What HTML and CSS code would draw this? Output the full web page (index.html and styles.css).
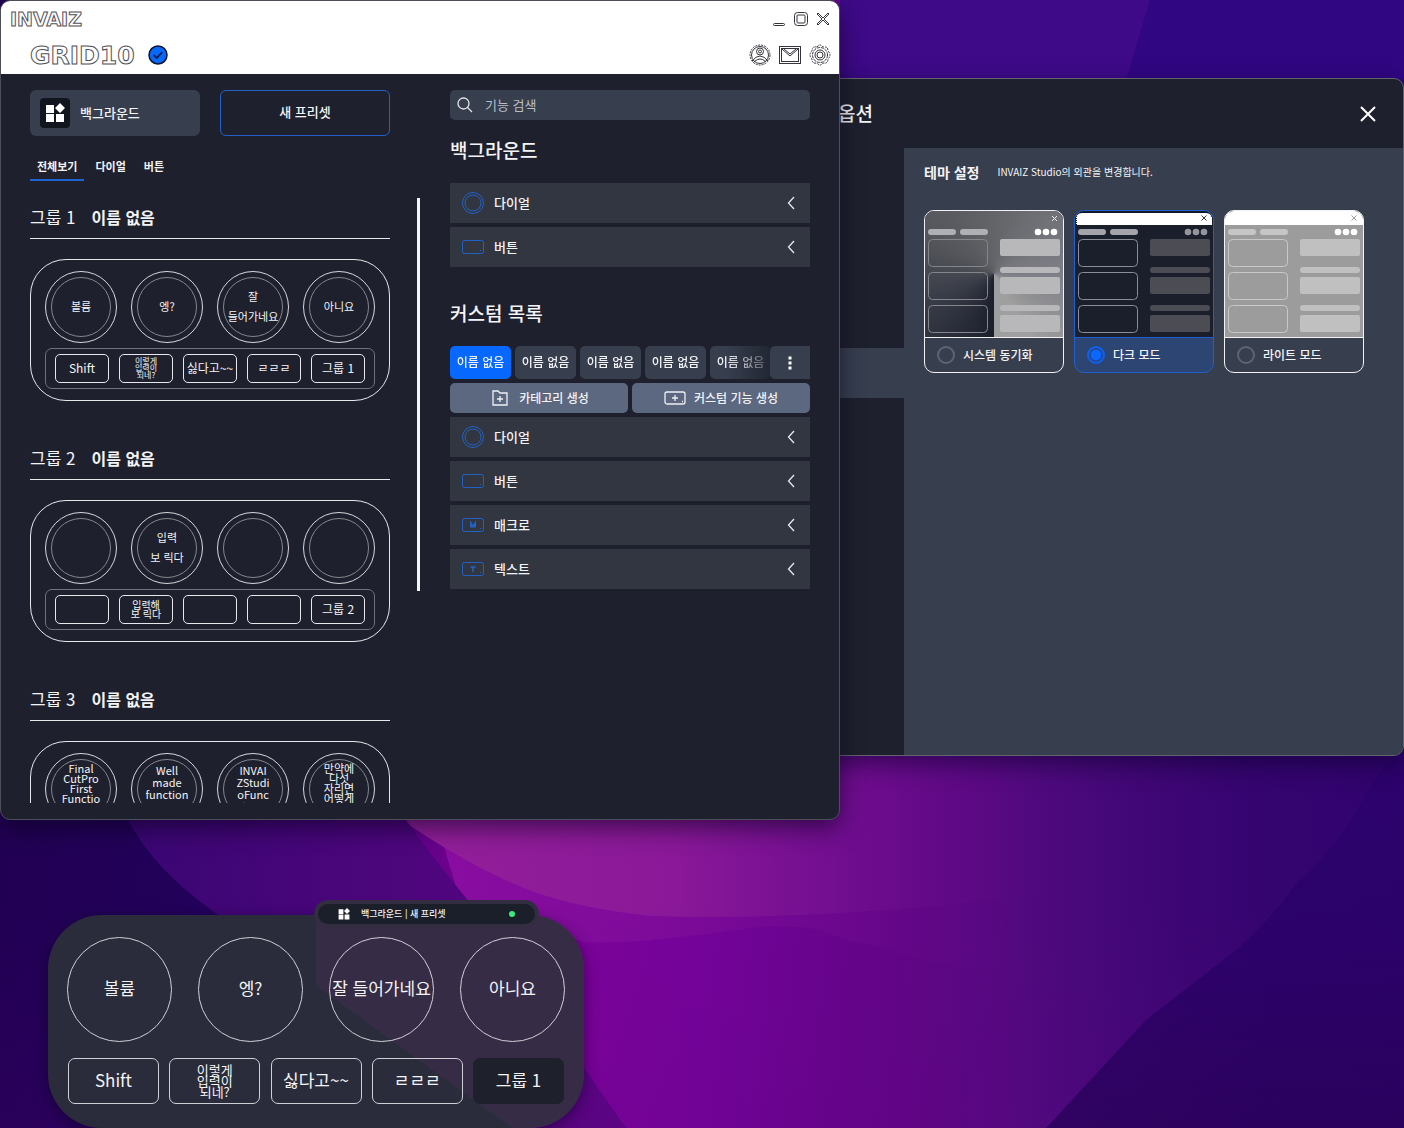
FILE: index.html
```html
<!DOCTYPE html>
<html lang="ko">
<head>
<meta charset="utf-8">
<meta name="viewport" content="width=device-width, initial-scale=1">
<title>INVAIZ Studio</title>
<link rel="stylesheet" href="styles.css">
</head>
<body>
<svg class="sprite" aria-hidden="true">
  <symbol id="i-dial" viewBox="0 0 24 24"><circle cx="12" cy="12" r="10.500"/><circle cx="12" cy="12" r="8"/></symbol>
  <symbol id="i-key" viewBox="0 0 24 24"><rect x="1.500" y="5.500" width="21" height="13" rx="2"/><path d="M19 15.500h1"/></symbol>
  <symbol id="i-left" viewBox="0 0 10 16"><path d="M8 2 2.500 8 8 14"/></symbol>
  <symbol id="i-apps" viewBox="0 0 20 20"><path d="M1 2h8v8H1zM1 11h8v8H1zM11 11h8v8h-8zM15 0l5 5-5 5-5-5z"/></symbol>
  <symbol id="i-theme" viewBox="0 0 138 126">
    <g class="m-pill"><rect x="3" y="18" width="28" height="6" rx="3"/><rect x="35" y="18" width="28" height="6" rx="3"/></g>
    <g class="m-dot"><circle cx="113" cy="21" r="3.300"/><circle cx="121" cy="21" r="3.300"/><circle cx="129" cy="21" r="3.300"/></g>
    <g class="m-box"><rect x="3.500" y="28.500" width="59" height="27" rx="4"/><rect x="3.500" y="61.500" width="59" height="27" rx="4"/><rect x="3.500" y="94.500" width="59" height="27" rx="4"/></g>
    <g class="m-bar"><rect x="75" y="28" width="60" height="17" rx="2"/><rect x="75" y="56" width="60" height="6" rx="3"/><rect x="75" y="66" width="60" height="17" rx="2"/><rect x="75" y="94" width="60" height="6" rx="3"/><rect x="75" y="104" width="60" height="17" rx="2"/></g>
  </symbol>
</svg>

<svg class="wallpaper" viewBox="0 0 1404 1128" preserveAspectRatio="none" aria-hidden="true">
  <defs>
    <linearGradient id="w-base" x1="0" x2="1" y1="0" y2="0"><stop offset="0" stop-color="#25005f"/><stop offset=".4" stop-color="#7c0299"/><stop offset=".5" stop-color="#74039a"/><stop offset=".64" stop-color="#610586"/><stop offset=".75" stop-color="#500a7e"/><stop offset=".9" stop-color="#3c0672"/></linearGradient>
    <linearGradient id="w-left" x1="0" x2="1" y1="0" y2="0"><stop offset="0" stop-color="#210053"/><stop offset="1" stop-color="#230260"/></linearGradient>
    <linearGradient id="w-mid" x1="0" x2="1" y1="0" y2="0"><stop offset="0" stop-color="#380672"/><stop offset="1" stop-color="#5c0584"/></linearGradient>
    <linearGradient id="w-band" x1="0" x2="1" y1="0" y2="0"><stop offset="0" stop-color="#8a0da1"/><stop offset=".4" stop-color="#800b9b"/><stop offset="1" stop-color="#660a88" stop-opacity="0"/></linearGradient>
    <linearGradient id="w-pink" x1="0" x2="1" y1="0" y2="0"><stop offset="0" stop-color="#95209a"/><stop offset=".4" stop-color="#8a1898"/><stop offset=".9" stop-color="#5c0d88" stop-opacity="0"/></linearGradient>
    <linearGradient id="w-right" x1="0" x2="0" y1="0" y2="1"><stop offset="0" stop-color="#2c026c"/><stop offset=".5" stop-color="#280068"/><stop offset="1" stop-color="#1c0050"/></linearGradient>
    <linearGradient id="w-shade" x1="0" x2="1" y1="0" y2="0"><stop offset="0" stop-color="#2c026c" stop-opacity="0"/><stop offset="1" stop-color="#2c026c" stop-opacity=".7"/></linearGradient>
    <linearGradient id="w-floor" x1="0" x2="0" y1="0" y2="1"><stop offset=".8" stop-color="#5c0080" stop-opacity="0"/><stop offset="1" stop-color="#5c0080" stop-opacity=".5"/></linearGradient>
  </defs>
  <rect width="1404" height="1128" fill="url(#w-base)"/>
  <path fill="url(#w-band)" d="M400 700h600v275q-22-2-41-8-45-8-82-21-30-4-57-16-35-7-70-2-40 6-80 10-50 6-86 4L460 900z"/>
  <path fill="url(#w-pink)" d="M380 700h740v180c-160 30-330 40-470 36q-90-10-140-34-50-22-108-62z"/>
  <path fill="url(#w-mid)" d="M100 780h280q30 50 86 118l160 230H100z"/>
  <path fill="url(#w-left)" d="M0 0h120v800q20 60 98 115l120 213H0z"/>
  <rect x="840" width="564" height="100" fill="#3e0a88"/>
  <path fill="#310682" d="M1150 0h254v120h-290z"/>
  <rect x="1000" y="740" width="404" height="388" fill="url(#w-shade)"/>
  <path fill="url(#w-right)" d="M1404 740l-35 47q-30 60-72 96-30 40-61 67l-90 70-100 108h358z" opacity=".75"/>
  <rect width="1404" height="1128" fill="url(#w-floor)" opacity=".3"/>
</svg>

<section class="options" aria-label="옵션">
  <header class="options-head"><h2>옵션</h2>
    <button class="plain" aria-label="닫기"><svg class="x-large" viewBox="0 0 18 18"><path d="M2 2l14 14M16 2 2 16"/></svg></button>
  </header>
  <div class="options-body">
    <nav class="side" aria-label="옵션 메뉴"><span class="side-on"></span></nav>
    <div class="pane">
      <div class="pane-head"><h3>테마 설정</h3><p>INVAIZ Studio의 외관을 변경합니다.</p></div>
      <div class="themes">
        <label class="theme system">
          <span class="mock"><svg viewBox="0 0 138 126"><path class="m-x" d="M127 5l5 5M132 5l-5 5"/><use href="#i-theme"/></svg></span>
          <span class="pick"><input type="radio" name="theme">시스템 동기화</span>
        </label>
        <label class="theme dark">
          <span class="mock"><svg viewBox="0 0 138 126"><path fill="#fff" d="M1 14V6q1-4 6-4h124q5 0 6 4v8z"/><path class="m-dash" d="M1.500 14V6q1-4.500 6-4.500h123q5 0 6 4.500"/><path class="m-x" d="M126.500 4.500l5 5M131.500 4.500l-5 5"/><use href="#i-theme"/></svg></span>
          <span class="pick"><input type="radio" name="theme" checked>다크 모드</span>
        </label>
        <label class="theme light">
          <span class="mock"><svg viewBox="0 0 138 126"><path fill="#fff" d="M0 0h138v14H0z"/><path class="m-x" d="M126.500 4.500l5 5M131.500 4.500l-5 5"/><use href="#i-theme"/></svg></span>
          <span class="pick"><input type="radio" name="theme">라이트 모드</span>
        </label>
      </div>
    </div>
  </div>
</section>

<main class="studio">
  <header class="studio-head">
    <div class="bar">
      <svg class="brand" width="90" height="24" role="img" aria-label="INVAIZ"><text x="1" y="19" font-size="19">INVAIZ</text></svg>
      <div class="tools wincontrols">
        <button class="plain" aria-label="최소화"><svg viewBox="0 0 16 16"><rect x="2.500" y="12.500" width="11" height="2" rx="1"/></svg></button>
        <button class="plain" aria-label="최대화"><svg viewBox="0 0 16 16"><rect x="1.500" y="1.500" width="13" height="13" rx="3"/><rect x="4" y="4" width="8" height="8" rx="1"/></svg></button>
        <button class="plain" aria-label="닫기"><svg viewBox="0 0 16 16"><path d="M2 3l5 5-5 5 1 1 5-5 5 5 1-1-5-5 5-5-1-1-5 5-5-5z"/></svg></button>
      </div>
    </div>
    <div class="bar">
      <div class="product">
        <svg class="brand" width="112" height="30" role="img" aria-label="GRID10"><text x="0" y="24" font-size="25">GRID10</text></svg>
        <svg width="20" height="20" viewBox="0 0 20 20"><circle cx="10" cy="10" r="9" fill="#0868f8" stroke="#071230" stroke-width="1.500"/><path d="M5.500 10l3.300 3 5.500-6" fill="none" stroke="#0b1d50" stroke-width="1.800"/></svg>
      </div>
      <div class="tools">
        <button class="plain" aria-label="계정"><svg viewBox="0 0 22 22"><circle cx="11" cy="11" r="10" stroke-dasharray="2 1"/><circle cx="11" cy="11" r="8.500"/><circle cx="11" cy="7.500" r="3.500"/><circle cx="11" cy="7.500" r="1.500"/><path d="M3 17q4-5 8-5t8 5M5.500 17.500q5.500-5 11 0"/></svg></button>
        <button class="plain" aria-label="메시지"><svg viewBox="0 0 22 22"><rect x=".5" y="2.500" width="21" height="17"/><rect x="2.500" y="4.500" width="17" height="13"/><path d="M3 5l8 7 8-7M5 5l6 5 6-5"/></svg></button>
        <button class="plain" aria-label="설정"><svg viewBox="0 0 22 22"><path stroke-dasharray="2 1" d="M8 3q3-4 6 0 5-1 5 4 4 4 0 8 0 5-5 4-3 4-6 0-5 1-5-4-4-4 0-8 0-5 5-4z"/><circle cx="11" cy="11" r="7.500" stroke-dasharray="3 1"/><circle cx="11" cy="11" r="5"/><circle cx="11" cy="11" r="3"/></svg></button>
      </div>
    </div>
  </header>

  <div class="studio-body">
    <section class="presets">
      <div class="preset-buttons">
        <button class="bg-button"><span class="app-icon"><svg width="20" height="20"><use href="#i-apps"/></svg></span>백그라운드</button>
        <button class="new-button">새 프리셋</button>
      </div>
      <nav class="views"><button class="on">전체보기</button><button>다이얼</button><button>버튼</button></nav>
      <div class="groups-wrap">
        <div class="groups">
          <article class="group">
            <h3>그룹 1 <b>이름 없음</b></h3>
            <div class="device">
              <div class="dials"><button><span>볼륨</span></button><button><span>엥?</span></button><button><span class="airy">잘<br>들어가네요</span></button><button><span>아니요</span></button></div>
              <div class="keys"><button>Shift</button><button class="tiny">이렇게<br>입력이<br>되네?</button><button>싫다고~~</button><button>ㄹㄹㄹ</button><button>그룹 1</button></div>
            </div>
          </article>
          <article class="group">
            <h3>그룹 2 <b>이름 없음</b></h3>
            <div class="device">
              <div class="dials"><button aria-label="다이얼 1"><span></span></button><button><span class="airy">입력<br>보 릭다</span></button><button aria-label="다이얼 3"><span></span></button><button aria-label="다이얼 4"><span></span></button></div>
              <div class="keys"><button aria-label="버튼 1"></button><button class="small">입력해<br>보 릭다</button><button aria-label="버튼 3"></button><button aria-label="버튼 4"></button><button>그룹 2</button></div>
            </div>
          </article>
          <article class="group">
            <h3>그룹 3 <b>이름 없음</b></h3>
            <div class="device">
              <div class="dials"><button><span class="tight">Final<br>CutPro<br>First<br>Functio<br>n one</span></button><button><span class="snug">Well<br>made<br>function<br>one</span></button><button><span class="snug">INVAI<br>ZStudi<br>oFunc<br>tion 1</span></button><button><span class="tight">만약에<br>다섯<br>자리면<br>어떻게<br>되나요</span></button></div>
              <div class="keys"><button aria-label="버튼 1"></button><button aria-label="버튼 2"></button><button aria-label="버튼 3"></button><button aria-label="버튼 4"></button><button aria-label="버튼 5"></button></div>
            </div>
          </article>
        </div>
        <span class="thumb"></span>
      </div>
    </section>

    <section class="library">
      <label class="search"><svg viewBox="0 0 18 18"><circle cx="7.500" cy="7.500" r="5.500"/><path d="M11.500 11.500 16 16"/></svg><input type="search" placeholder="기능 검색" aria-label="기능 검색"></label>
      <h2>백그라운드</h2>
      <div class="stack">
        <button class="row"><svg class="kind"><use href="#i-dial"/></svg>다이얼<svg class="chev"><use href="#i-left"/></svg></button>
        <button class="row"><svg class="kind"><use href="#i-key"/></svg>버튼<svg class="chev"><use href="#i-left"/></svg></button>
      </div>
      <h2 class="custom">커스텀 목록</h2>
      <div class="stack">
        <div class="cats">
          <div class="cat-list"><button class="on">이름 없음</button><button>이름 없음</button><button>이름 없음</button><button>이름 없음</button><button>이름 없음</button></div>
          <button class="more" aria-label="더 보기"><svg width="4" height="16" viewBox="0 0 4 16"><path fill="#fff" d="M.5 1.500h3v3h-3zM.5 6.500h3v3h-3zM.5 11.500h3v3h-3z"/></svg></button>
        </div>
        <div class="makers">
          <button><svg viewBox="0 0 22 18"><path d="M4 2h5l2 2h7v12H4zM11 7v6M8 10h6"/></svg>카테고리 생성</button>
          <button><svg viewBox="0 0 22 18"><rect x="1" y="3" width="20" height="12" rx="2"/><path d="M11 6v6M8 9h6M18 12.500h1"/></svg>커스텀 기능 생성</button>
        </div>
        <button class="row"><svg class="kind"><use href="#i-dial"/></svg>다이얼<svg class="chev"><use href="#i-left"/></svg></button>
        <button class="row"><svg class="kind"><use href="#i-key"/></svg>버튼<svg class="chev"><use href="#i-left"/></svg></button>
        <button class="row"><svg class="kind" viewBox="0 0 24 24"><use href="#i-key"/><path d="M10 14.500v-4l2 3 2-3v4" stroke-width="2"/></svg>매크로<svg class="chev"><use href="#i-left"/></svg></button>
        <button class="row"><svg class="kind" viewBox="0 0 24 24"><use href="#i-key"/><path d="M9.500 10h5M12 10v5" stroke-width="1.500"/></svg>텍스트<svg class="chev"><use href="#i-left"/></svg></button>
      </div>
    </section>
  </div>
</main>

<aside class="widget" aria-label="GRID10">
  <div class="status"><svg width="12" height="12"><use href="#i-apps"/></svg><span>백그라운드 | 새 프리셋</span><i></i></div>
  <div class="w-dials"><button>볼륨</button><button>엥?</button><button>잘 들어가네요</button><button>아니요</button></div>
  <div class="w-keys"><button>Shift</button><button class="tiny">이렇게<br>입력이<br>되네?</button><button>싫다고~~</button><button>ㄹㄹㄹ</button><button class="on">그룹 1</button></div>
</aside>
</body>
</html>
```
FILE: styles.css
```css
* { box-sizing: border-box; }
body {
  margin: 0;
  min-height: 100vh;
  position: relative;
  overflow: hidden;
  background: #40098a;
  color: #f4f4f6;
  font: 500 13px/20px "Noto Sans CJK KR", "Noto Sans", sans-serif;
}
h2, h3, p { margin: 0; }
button {
  margin: 0;
  padding: 0 0 2px;
  border: 0;
  background: none;
  color: inherit;
  font: inherit;
  white-space: nowrap;
}
svg { display: block; flex: none; }
.sprite { position: absolute; width: 0; height: 0; }
.wallpaper { position: absolute; inset: 0; width: 100%; height: 100%; }
.plain { display: flex; padding: 0; }

/* Options window */
.options {
  position: absolute;
  top: 78px;
  left: 798px;
  right: 0;
  bottom: 372px;
  display: flex;
  flex-direction: column;
  overflow: hidden;
  border: 1px solid #62646f;
  border-radius: 10px;
  background: #1e212d;
  box-shadow: 0 8px 24px rgba(10, 0, 40, .55);
}
.options-head {
  display: flex;
  align-items: center;
  justify-content: space-between;
  height: 69px;
  padding: 0 26px 0 39px;
}
.options-head h2 { padding-bottom: 2px; font-size: 19px; font-weight: 500; }
.x-large { width: 18px; height: 18px; fill: none; stroke: #fff; stroke-width: 2; }
.options-body { display: flex; flex: 1; }
.side { width: 105px; padding-top: 200px; }
.side-on { display: block; height: 50px; background: #373f4f; }
.pane { flex: 1; padding: 14px 20px; background: #373f4f; }
.pane-head { display: flex; align-items: center; gap: 18px; }
.pane-head h3 { font-size: 14px; font-weight: 700; }
.pane-head p { font-size: 10px; font-weight: 400; }
.themes { display: flex; gap: 10px; padding-top: 28px; }
.theme {
  width: 140px;
  overflow: hidden;
  border: 1px solid #f2f2f4;
  border-radius: 10px;
  font-size: 12px;
}
.mock { display: block; border-bottom: 1px solid #f2f2f4; }
.mock svg { width: 100%; }
.pick { display: flex; align-items: center; gap: 8px; height: 34px; padding-left: 12px; }
.pick input {
  appearance: none;
  width: 18px;
  height: 18px;
  margin: 0;
  border: 2px solid #5c6475;
  border-radius: 50%;
}
.pick input:checked { border-color: #0d62e8; background: radial-gradient(#0868ff 50%, #23489a 56%); }
.theme { --pill: #b0b0b4; --dot: #fff; --box: #85868c; --bar: #b8b8bb; }
.dark { --pill: #a4a4aa; --dot: #94959d; --box: #8c8d96; --bar: #4c4d54; }
.light { --pill: #c6c6c6; --box: #c8c8c8; --bar: #c0c0c0; }
.m-pill { fill: var(--pill); }
.m-dot { fill: var(--dot); }
.m-box { fill: none; stroke: var(--box); }
.m-bar { fill: var(--bar); }
.m-x { fill: none; stroke: #eee; }
.system .mock { background: conic-gradient(from 180deg at 50% 50%, #1b1e2b, #3a3e49 70deg, #55565b 120deg, #66676b 190deg, #7e7f86 270deg, #9f9f9f 330deg, #9f9f9f); }
.dark { border-color: #1f5fcf; background: #2d4572; }
.dark .mock { border-color: #1f5fcf; background: #1b1e2b; }
.dark .m-x { stroke: #333; }
.m-dash { fill: none; stroke: #05081c; stroke-dasharray: 1 1; }
.light .mock { background: #9c9c9c; }
.light .m-x { stroke: #999; }

/* Studio window */
.studio {
  position: absolute;
  top: 0;
  left: 0;
  right: 564px;
  bottom: 308px;
  min-width: 840px;
  display: flex;
  flex-direction: column;
  overflow: hidden;
  border: 1px solid #4c4e58;
  border-radius: 10px;
  background: #1e212d;
  box-shadow: 0 8px 24px rgba(10, 0, 30, .6);
}
.studio-head { height: 73px; background: #fff; }
.bar { display: flex; align-items: center; justify-content: space-between; height: 36px; padding: 0 8px; }
.brand text {
  fill: #fff;
  stroke: #50505a;
  stroke-width: 1;
  font-family: "DejaVu Sans", sans-serif;
  font-weight: 700;
}
.product { display: flex; align-items: center; gap: 6px; padding-left: 21px; }
.tools { display: flex; gap: 8px; fill: none; stroke: #33343c; stroke-width: 1; }
.tools svg { width: 22px; height: 22px; }
.wincontrols { gap: 6px; }
.wincontrols svg { width: 16px; height: 16px; }
.studio-body {
  flex: 1;
  min-height: 0;
  display: grid;
  grid-template-columns: repeat(2, minmax(0, 1fr));
  column-gap: 60px;
  padding: 16px 29px;
}
.presets { display: flex; flex-direction: column; min-height: 0; }
.preset-buttons { display: grid; grid-template-columns: 1fr 1fr; gap: 20px; }
.preset-buttons button { height: 46px; border-radius: 6px; }
.bg-button { display: flex; align-items: center; gap: 10px; padding: 0 0 0 10px; background: #373f4f; }
.app-icon { padding: 5px; border-radius: 4px; background: #11151e; fill: #fff; }
.new-button { border: 1px solid #2460c8; }
.views { display: flex; gap: 4px; padding: 16px 0 17px; }
.views button { height: 29px; padding: 0 7px; border-bottom: 2px solid transparent; font-size: 11px; font-weight: 700; }
.views .on { border-color: #2062d0; }
.groups-wrap { position: relative; flex: 1; min-height: 0; }
.groups { height: 100%; overflow: hidden; }
.thumb { position: absolute; top: 0; right: -30px; width: 3px; height: 65%; background: #f4f4f8; }
.group h3 {
  display: flex;
  gap: 16px;
  height: 41px;
  border-bottom: 1px solid #e8e8ec;
  font-size: 17px;
  font-weight: 400;
  line-height: 38px;
}
.group h3 b { font-size: 16px; }
.device {
  height: 142px;
  margin: 20px 0 38px;
  padding: 11px 14px;
  border: 1px solid #e8e8ec;
  border-radius: 36px;
}
.dials { display: flex; justify-content: space-between; }
.dials button {
  display: flex;
  align-items: center;
  justify-content: center;
  width: 72px;
  height: 72px;
  padding: 0;
  border: 1px solid #d8d8dc;
  border-radius: 50%;
  font-size: 11px;
  font-weight: 400;
}
.dials span {
  display: grid;
  place-content: center;
  width: 60px;
  height: 60px;
  padding-bottom: 2px;
  border: 1px solid #85868e;
  border-radius: 50%;
}
.dials .airy { line-height: 20px; }
.dials .snug { line-height: 12px; }
.dials .tight { line-height: 10px; }
.keys {
  display: flex;
  justify-content: space-between;
  margin-top: 5px;
  padding: 5px 9px;
  border: 1px solid #70727b;
  border-radius: 7px;
}
.keys button {
  width: 54px;
  height: 29px;
  border: 1px solid #e8e8ec;
  border-radius: 5px;
  font-size: 12px;
  font-weight: 400;
}
.keys .small { font-size: 10px; line-height: 9px; }
.keys .tiny { font-size: 8px; line-height: 7px; }

.search {
  display: flex;
  align-items: center;
  gap: 11px;
  height: 30px;
  padding: 0 6px;
  border-radius: 5px;
  background: #373f4f;
}
.search svg { width: 18px; height: 18px; fill: none; stroke: #e4e4e8; stroke-width: 1.3; }
.search input { flex: 1; padding: 0; border: 0; background: none; color: #fff; font: inherit; font-weight: 400; }
.search input::placeholder { color: #b9bdc6; opacity: 1; }
.library h2 { padding: 16px 0 19px; font-size: 19px; font-weight: 500; line-height: 28px; }
.library .custom { padding: 32px 0 19px; }
.stack { display: flex; flex-direction: column; gap: 4px; }
.row { display: flex; align-items: center; gap: 9px; height: 40px; padding: 0 14px 0 11px; background: #313641; }
.kind { width: 24px; height: 24px; fill: none; stroke: #2361c6; }
.chev { width: 10px; height: 16px; margin-left: auto; fill: none; stroke: #e8e8ec; stroke-width: 1.3; }
.cats { display: flex; height: 33px; }
.cat-list { flex: 1; min-width: 0; display: flex; gap: 4px; overflow: hidden; -webkit-mask-image: linear-gradient(90deg, #000 86%, rgba(0, 0, 0, .2)); mask-image: linear-gradient(90deg, #000 86%, rgba(0, 0, 0, .2)); }
.cat-list button { width: 61px; flex: none; border-radius: 5px; background: #373f4f; font-size: 12px; }
.cat-list .on { background: #0768ff; }
.more { display: grid; place-content: center; width: 40px; padding: 0; border-radius: 5px 0 0 5px; background: #373f4f; }
.makers { display: grid; grid-template-columns: 1fr 1fr; gap: 4px; }
.makers button {
  display: flex;
  align-items: center;
  justify-content: center;
  gap: 8px;
  height: 30px;
  padding: 0;
  border-radius: 5px;
  background: #5b6880;
  font-size: 12px;
}
.makers svg { width: 22px; height: 18px; fill: none; stroke: #f0f0f4; stroke-width: 1.3; }

/* Desktop widget */
.widget {
  position: absolute;
  left: 48px;
  bottom: 0;
  width: 536px;
  padding: 22px 19px 24px;
  border-radius: 54px;
  background:
    linear-gradient(36deg, #2a2c3b 56%, transparent 56%),
    linear-gradient(90deg, #2a2c3b 50%, #372c45 50%);
  box-shadow: 0 4px 14px rgba(10, 0, 30, .5);
  font-size: 17px;
  font-weight: 400;
}
.status {
  position: absolute;
  top: -15px;
  left: 266px;
  display: flex;
  align-items: center;
  gap: 11px;
  width: 225px;
  height: 28px;
  padding: 0 20px;
  border: 4px solid #332d42;
  border-radius: 14px;
  background: #1a1f29;
  fill: #fff;
  font-size: 9px;
  font-weight: 500;
}
.status i { width: 6px; height: 6px; margin-left: auto; border-radius: 50%; background: #3de87c; }
.w-dials, .w-keys { display: flex; justify-content: space-between; }
.w-dials button { width: 105px; height: 105px; padding-bottom: 4px; border: 1px solid #cfd0d6; border-radius: 50%; }
.w-keys { padding: 16px 1px 0; }
.w-keys button { width: 91px; height: 46px; border: 1px solid #cfd0d6; border-radius: 7px; }
.w-keys .tiny { font-size: 13px; line-height: 11px; }
.w-keys .on { border-color: #1e202c; background: #1e202c; }
```
